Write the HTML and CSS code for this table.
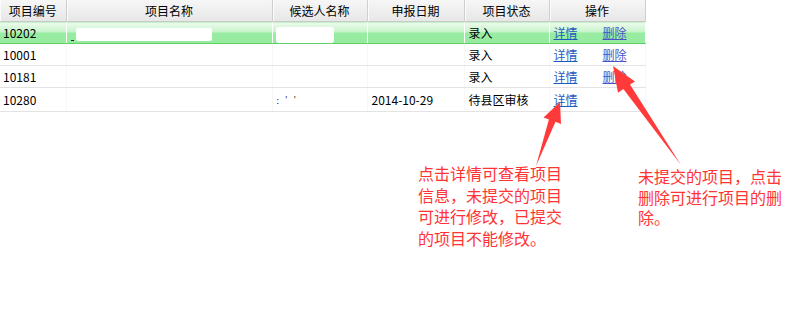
FILE: index.html
```html
<!DOCTYPE html>
<html lang="zh-CN">
<head>
<meta charset="utf-8">
<title>项目列表</title>
<link rel="stylesheet" href="styles.css">
</head>
<body>
<div class="page">
  <table class="grid">
    <colgroup>
      <col class="c-id"><col class="c-name"><col class="c-cand"><col class="c-date"><col class="c-state"><col class="c-ops">
    </colgroup>
    <thead>
      <tr>
        <th>项目编号</th>
        <th>项目名称</th>
        <th>候选人名称</th>
        <th>申报日期</th>
        <th>项目状态</th>
        <th>操作</th>
      </tr>
    </thead>
    <tbody>
      <tr class="selected">
        <td>10202</td>
        <td><span class="dash"></span><span class="mask mask-name"></span></td>
        <td><span class="mask mask-cand"></span></td>
        <td></td>
        <td>录入</td>
        <td class="ops"><a href="#">详情</a><a href="#" class="del">删除</a></td>
      </tr>
      <tr>
        <td>10001</td>
        <td></td>
        <td></td>
        <td></td>
        <td>录入</td>
        <td class="ops"><a href="#">详情</a><a href="#" class="del">删除</a></td>
      </tr>
      <tr>
        <td>10181</td>
        <td></td>
        <td></td>
        <td></td>
        <td>录入</td>
        <td class="ops"><a href="#">详情</a><a href="#" class="del">删除</a></td>
      </tr>
      <tr>
        <td>10280</td>
        <td></td>
        <td><span class="specks">: ' '</span></td>
        <td>2014-10-29</td>
        <td>待县区审核</td>
        <td class="ops"><a href="#">详情</a></td>
      </tr>
    </tbody>
  </table>

  <p class="note note-detail">点击详情可查看项目信息，未提交的项目可进行修改，已提交的项目不能修改。</p>
  <p class="note note-delete">未提交的项目，点击删除可进行项目的删除。</p>

  <svg class="arrows" width="810" height="324" viewBox="0 0 810 324">
    <polygon points="560,102 561,124 555.5,121.8 536,166 548.9,119.4 543.5,117.4" />
    <polygon points="613,66 635,81.5 630,84.4 681,165 623.4,89 618,92.8" />
  </svg>
</div>
</body>
</html>
```

FILE: styles.css
```css
html, body {
  margin: 0;
  padding: 0;
  background: #fff;
}

.page {
  position: relative;
  width: 810px;
  height: 324px;
  font-family: "Noto Sans CJK SC", "Microsoft YaHei", sans-serif;
  font-size: 12px;
  color: #000;
}

.grid {
  border-collapse: collapse;
  table-layout: fixed;
  width: 645px;
}

.c-id { width: 66px; }
.c-name { width: 206px; }
.c-cand { width: 95px; }
.c-date { width: 97px; }
.c-state { width: 85px; }
.c-ops { width: 96px; }

.grid th {
  height: 21px;
  padding: 0;
  font-weight: normal;
  text-align: center;
  line-height: 21px;
  background: linear-gradient(#f6f6f6, #e7e7e7);
  border-bottom: 1px solid #c9c9c9;
  border-right: 1px solid #cfcfcf;
  box-shadow: inset 1px 0 0 #fbfbfb;
}

.grid td {
  height: 21px;
  padding: 0 0 0 4px;
  line-height: 21px;
  white-space: nowrap;
  overflow: hidden;
  border-bottom: 1px solid #e3e3e3;
  border-right: 1px solid #f7f7f7;
  vertical-align: middle;
}

.grid td:first-child { padding-left: 3px; }

.grid tr.selected td {
  background: linear-gradient(#eefbee 0%, #c6f4c9 45%, #98eca2 50%, #96eb9f 100%);
  border-bottom: 1px solid #5fd16b;
  border-right: 1px solid #fff;
}

.mask {
  display: inline-block;
  background: #fff;
  vertical-align: middle;
}

.mask-name {
  width: 136px;
  height: 13px;
  margin-left: 2px;
  border-radius: 2px;
}

.mask-cand {
  width: 58px;
  height: 16px;
  margin-left: -1px;
  border-radius: 3px;
}

.dash {
  display: inline-block;
  width: 3px;
  height: 1px;
  background: #222;
  vertical-align: -3px;
}

.specks {
  font-size: 9px;
  color: #333;
  letter-spacing: 2px;
}

.ops a {
  color: #1f5bbf;
  text-decoration: underline;
}

.ops a.del {
  margin-left: 25px;
  color: #4855c9;
}

.note {
  position: absolute;
  margin: 0;
  color: #ff3434;
  font-size: 16px;
  line-height: 21.5px;
}

.note-detail {
  left: 418px;
  top: 163px;
  width: 146px;
}

.note-delete {
  left: 638px;
  top: 166px;
  width: 146px;
  line-height: 20.5px;
}

.arrows {
  position: absolute;
  left: 0;
  top: 0;
  pointer-events: none;
}

.arrows polygon {
  fill: #ff3a3a;
}
```
